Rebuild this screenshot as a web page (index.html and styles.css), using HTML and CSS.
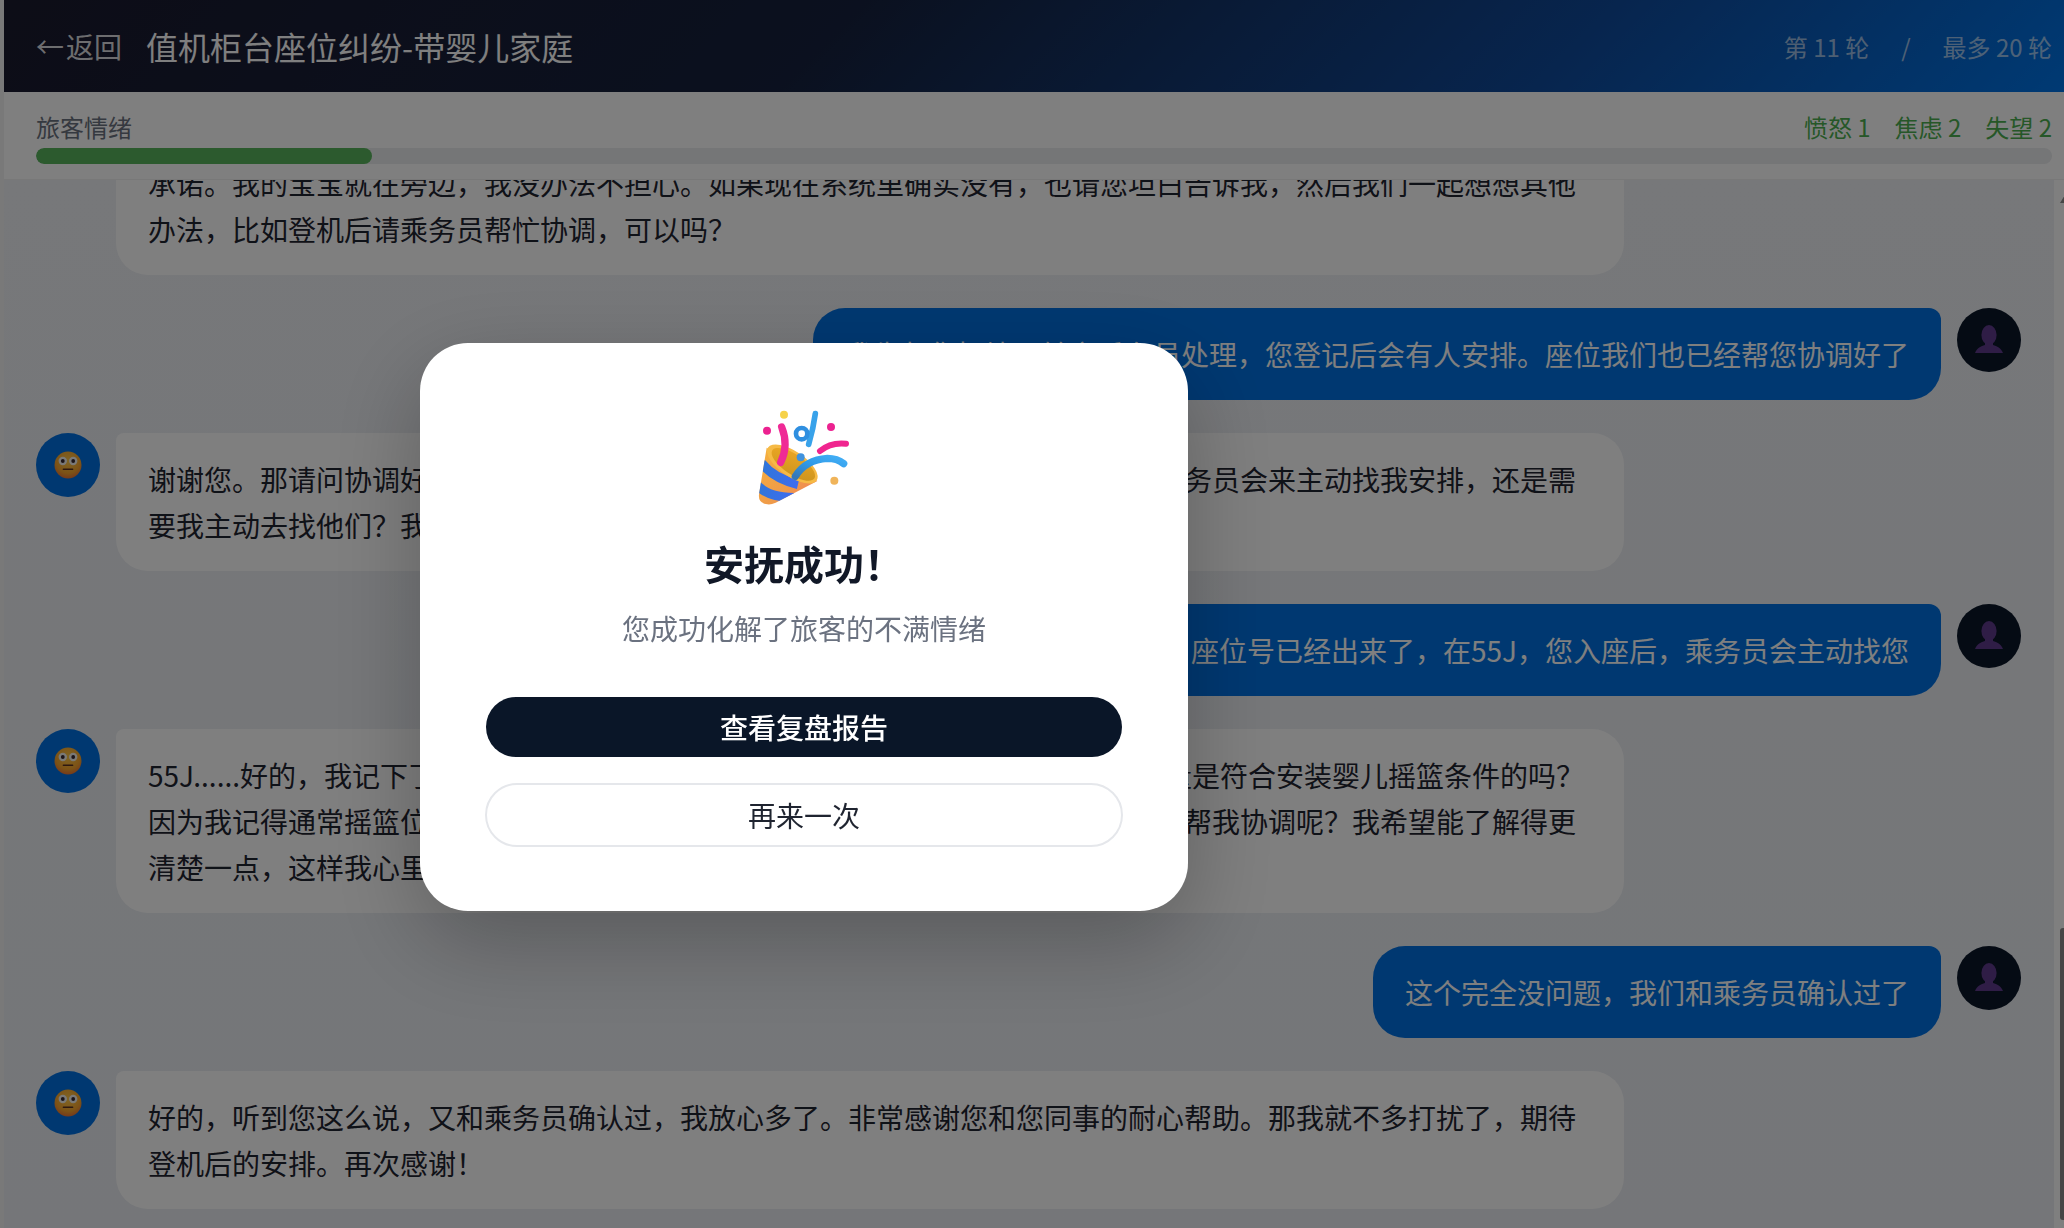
FILE: index.html
```html
<!DOCTYPE html>
<html lang="zh-CN">
<head>
<meta charset="utf-8">
<title>值机柜台座位纠纷-带婴儿家庭</title>
<link rel="stylesheet" href="styles.css">
</head>
<body>
<svg class="defs" width="0" height="0" aria-hidden="true">
  <defs>
    <radialGradient id="faceGrad" cx="50%" cy="35%" r="70%">
      <stop offset="0" stop-color="#ffc94a"/>
      <stop offset=".65" stop-color="#f9a62c"/>
      <stop offset="1" stop-color="#e8683a"/>
    </radialGradient>
    <symbol id="face" viewBox="0 0 28 28">
      <circle cx="14" cy="14" r="13.5" fill="url(#faceGrad)"/>
      <circle cx="8.8" cy="10" r="4.2" fill="#f4f2ee"/>
      <circle cx="19.2" cy="10" r="4.2" fill="#f4f2ee"/>
      <circle cx="8.8" cy="10" r="1.9" fill="#3a2a30"/>
      <circle cx="19.2" cy="10" r="1.9" fill="#3a2a30"/>
      <rect x="8.6" y="17.4" width="10.8" height="1.7" rx=".8" fill="#5a3020"/>
    </symbol>
    <symbol id="user" viewBox="0 0 64 64">
      <ellipse cx="32" cy="27" rx="7.6" ry="10" fill="#5e3a8c"/>
      <path d="M28 33h8v4c4 1 8 3 10 8H18c2-5 6-7 10-8z" fill="#5e3a8c"/>
    </symbol>
  </defs>
</svg>
<div class="app">
  <header class="topbar">
    <div class="topbar-left">
      <span class="back"><span class="back-arrow">←</span>返回</span>
      <span class="title">值机柜台座位纠纷-带婴儿家庭</span>
    </div>
    <div class="rounds">
      <span>第 11 轮</span>
      <span>/</span>
      <span>最多 20 轮</span>
    </div>
  </header>
  <section class="mood">
    <div class="mood-row">
      <span class="mood-label">旅客情绪</span>
      <div class="mood-tags">
        <span>愤怒 1</span>
        <span>焦虑 2</span>
        <span>失望 2</span>
      </div>
    </div>
    <div class="track"><div class="fill" style="width:16.67%"></div></div>
  </section>
  <div class="chat-area">
    <main class="chat">
      <div class="msg left">
        <div class="avatar guest"><svg class="face-icon"><use href="#face"/></svg></div>
        <div class="bubble">您刚才说已经帮我们协调好了，可是我还是想请您给我一个明确的说法，不要只是口头的<br>承诺。我的宝宝就在旁边，我没办法不担心。如果现在系统里确实没有，也请您坦白告诉我，然后我们一起想想其他办法，比如登机后请乘务员帮忙协调，可以吗？</div>
      </div>
      <div class="msg right">
        <div class="bubble">我先帮您把情况转交乘务员处理，您登记后会有人安排。座位我们也已经帮您协调好了</div>
        <div class="avatar agent"><svg class="user-icon"><use href="#user"/></svg></div>
      </div>
      <div class="msg left">
        <div class="avatar guest"><svg class="face-icon"><use href="#face"/></svg></div>
        <div class="bubble">谢谢您。那请问协调好的具体座位号现在能查到吗？我想先记下来。登机以后会是乘务员会来主动找我安排，还是需要我主动去找他们？我想提前做好准备。</div>
      </div>
      <div class="msg right">
        <div class="bubble">您放心，座位号已经出来了，在55J，您入座后，乘务员会主动找您</div>
        <div class="avatar agent"><svg class="user-icon"><use href="#user"/></svg></div>
      </div>
      <div class="msg left">
        <div class="avatar guest"><svg class="face-icon"><use href="#face"/></svg></div>
        <div class="bubble">55J......好的，我记下了。不过我想再确认一下，请问您说的这个座位的位置和承重量是符合安装婴儿摇篮条件的吗？因为我记得通常摇篮位置都是在客舱舱壁的前面一排，如果不符合的话，您能不能再帮我协调呢？我希望能了解得更清楚一点，这样我心里也踏实一些。谢谢您。</div>
      </div>
      <div class="msg right">
        <div class="bubble">这个完全没问题，我们和乘务员确认过了</div>
        <div class="avatar agent"><svg class="user-icon"><use href="#user"/></svg></div>
      </div>
      <div class="msg left">
        <div class="avatar guest"><svg class="face-icon"><use href="#face"/></svg></div>
        <div class="bubble">好的，听到您这么说，又和乘务员确认过，我放心多了。非常感谢您和您同事的耐心帮助。那我就不多打扰了，期待登机后的安排。再次感谢！</div>
      </div>
    </main>
    <div class="scrollbar">
      <span class="scroll-arrow"></span>
      <span class="scroll-thumb"></span>
    </div>
  </div>
</div>
<div class="overlay">
  <div class="modal">
    <svg class="popper" viewBox="100 50 300 300" aria-hidden="true">
      <defs>
        <linearGradient id="coneGrad" x1="0" y1="0" x2="1" y2="1">
          <stop offset="0" stop-color="#f6b23c"/>
          <stop offset=".6" stop-color="#ef9a4a"/>
          <stop offset="1" stop-color="#f27a5c"/>
        </linearGradient>
        <linearGradient id="innerGrad" x1="0" y1="0" x2="1" y2="1">
          <stop offset="0" stop-color="#efa824"/>
          <stop offset="1" stop-color="#c8921e"/>
        </linearGradient>
        <linearGradient id="bandGrad" x1="0" y1="0" x2="1" y2="0">
          <stop offset="0" stop-color="#2f76d8"/>
          <stop offset="1" stop-color="#3f6cf0"/>
        </linearGradient>
        <linearGradient id="streamGrad" x1="0" y1="1" x2="1" y2="0">
          <stop offset="0" stop-color="#3478b8"/>
          <stop offset=".5" stop-color="#2f9ae8"/>
          <stop offset="1" stop-color="#42aef5"/>
        </linearGradient>
        <clipPath id="coneClip">
          <path d="M138 172 L115 312 Q112 338 140 342 Q150 344 165 337 L290 272 Z"/>
        </clipPath>
      </defs>
      <path d="M138 172 L115 312 Q112 338 140 342 Q150 344 165 337 L290 272 Z" fill="url(#coneGrad)"/>
      <g clip-path="url(#coneClip)" fill="none" stroke="url(#bandGrad)" stroke-width="28">
        <path d="M122 218 Q160 265 232 282"/>
        <path d="M108 282 Q140 322 220 322"/>
      </g>
      <ellipse cx="215" cy="221" rx="88" ry="38" transform="rotate(34 215 221)" fill="#f6ba45"/>
      <ellipse cx="218" cy="222" rx="76" ry="30" transform="rotate(34 218 222)" fill="url(#innerGrad)"/>
      <path d="M183 110 Q205 165 180 216" fill="none" stroke="#ef2a96" stroke-width="22" stroke-linecap="round"/>
      <path d="M284 70 Q278 115 264 162" fill="none" stroke="#38a2ea" stroke-width="17" stroke-linecap="round"/>
      <circle cx="243" cy="130" r="17" fill="none" stroke="#2f8fe0" stroke-width="14"/>
      <path d="M298 182 Q330 155 376 160" fill="none" stroke="#f0258f" stroke-width="18" stroke-linecap="round"/>
      <path d="M224 258 Q255 208 320 204 Q350 204 369 220" fill="none" stroke="url(#streamGrad)" stroke-width="22" stroke-linecap="round"/>
      <circle cx="190" cy="73" r="12" fill="#f6d24a"/>
      <circle cx="139" cy="121" r="12" fill="#ec2290"/>
      <circle cx="331" cy="110" r="12" fill="#ec2290"/>
      <circle cx="240" cy="201" r="12" fill="#3f92de"/>
      <circle cx="341" cy="271" r="12" fill="#f0b45a"/>
    </svg>
    <h2 class="modal-title">安抚成功！</h2>
    <p class="modal-sub">您成功化解了旅客的不满情绪</p>
    <button class="btn btn-primary">查看复盘报告</button>
    <button class="btn btn-outline">再来一次</button>
  </div>
</div>
</body>
</html>
```

FILE: styles.css
```css
* { box-sizing: border-box; }

html, body {
  margin: 0;
  height: 100%;
  overflow: hidden;
}

body {
  font-family: "Noto Sans CJK SC", sans-serif;
  background: #f2f2f2;
  color: #1f2430;
}

.defs { position: absolute; }

.app {
  height: 1228px;
  padding-left: 4px;
  display: flex;
  flex-direction: column;
}

.topbar {
  height: 92px;
  flex-shrink: 0;
  padding: 0 12px 0 32px;
  display: flex;
  align-items: center;
  justify-content: space-between;
  color: #fff;
  background: linear-gradient(135deg, #1a1a2e 0%, #16213e 40%, #0f4a9c 75%, #0074e8 100%);
}

.topbar-left {
  display: flex;
  align-items: center;
  gap: 24px;
}

.back {
  font-size: 28px;
  color: rgba(255, 255, 255, .85);
}

.back-arrow { margin-right: 2px; }

.title { font-size: 32px; }

.rounds {
  display: flex;
  gap: 32px;
  font-size: 24px;
  color: rgba(255, 255, 255, .62);
}

.mood {
  flex-shrink: 0;
  height: 88px;
  padding: 16px 12px 16px 32px;
  background: #fff;
  border-bottom: 1px solid #f0f0f0;
  position: relative;
  z-index: 1;
}

.mood-row {
  height: 36px;
  margin-bottom: 4px;
  display: flex;
  align-items: center;
  justify-content: space-between;
  font-size: 24px;
}

.mood-label { color: #6b7280; }

.mood-tags {
  display: flex;
  gap: 24px;
  color: #4caf50;
}

.track {
  height: 16px;
  border-radius: 8px;
  background: #eaecee;
  overflow: hidden;
}

.fill {
  height: 100%;
  border-radius: 8px;
  background: #58b45c;
}

.chat-area {
  flex: 1;
  min-height: 0;
  display: flex;
  background: linear-gradient(180deg, #eef0f4, #eaedf2);
}

.chat {
  flex: 1;
  min-width: 0;
  padding: 0 33px 19px 32px;
  display: flex;
  flex-direction: column;
  justify-content: flex-end;
  gap: 33px;
  overflow: hidden;
}

.msg {
  display: flex;
  align-items: flex-start;
  gap: 16px;
  flex-shrink: 0;
}

.msg.right { justify-content: flex-end; }

.avatar {
  width: 64px;
  height: 64px;
  border-radius: 50%;
  flex-shrink: 0;
  display: flex;
  align-items: center;
  justify-content: center;
}

.avatar.guest { background: #0071e3; }
.avatar.agent { background: #0a1628; }

.face-icon { width: 28px; height: 28px; }
.user-icon { width: 64px; height: 64px; }

.bubble {
  max-width: 1508px;
  padding: 23px 32px;
  font-size: 28px;
  line-height: 46px;
}

.left .bubble {
  background: #fff;
  border-radius: 8px 32px 32px 32px;
}

.right .bubble {
  background: #0071e3;
  color: #fff;
  border-radius: 32px 12px 32px 32px;
}

.scrollbar {
  width: 10px;
  flex-shrink: 0;
  background: #fff;
  position: relative;
}

.scroll-arrow {
  position: absolute;
  top: 15px;
  left: 6px;
  width: 0;
  height: 0;
  border-left: 5px solid transparent;
  border-right: 5px solid transparent;
  border-bottom: 8px solid #8c8c8c;
}

.scroll-thumb {
  position: absolute;
  top: 748px;
  right: 0;
  width: 4px;
  height: 292px;
  border-radius: 3px 0 0 3px;
  background: #8c8c8c;
}

.overlay {
  position: fixed;
  inset: 0;
  z-index: 10;
  padding: 343px 0 0 420px;
  background: rgba(0, 0, 0, .5);
}

.modal {
  width: 768px;
  height: 568px;
  padding: 64px 65px;
  border-radius: 48px;
  background: #fff;
  display: flex;
  flex-direction: column;
  align-items: center;
  box-shadow: 0 30px 90px rgba(0, 0, 0, .25);
}

.popper {
  width: 100px;
  height: 100px;
  flex-shrink: 0;
}

.modal-title {
  margin: 26px 0 0;
  font-size: 40px;
  line-height: 60px;
  font-weight: 700;
  color: #111827;
}

.modal-sub {
  margin: 14px 0 48px;
  font-size: 28px;
  line-height: 42px;
  color: #6b7280;
}

.btn {
  font-family: inherit;
  font-size: 28px;
  border-radius: 999px;
  flex-shrink: 0;
  cursor: pointer;
}

.btn-primary {
  width: 636px;
  height: 60px;
  border: 0;
  background: #0a1628;
  color: #fff;
  font-weight: 500;
}

.btn-outline {
  width: 638px;
  height: 64px;
  margin-top: 26px;
  border: 2px solid #e5e7eb;
  background: #fff;
  color: #1f2430;
}
```
